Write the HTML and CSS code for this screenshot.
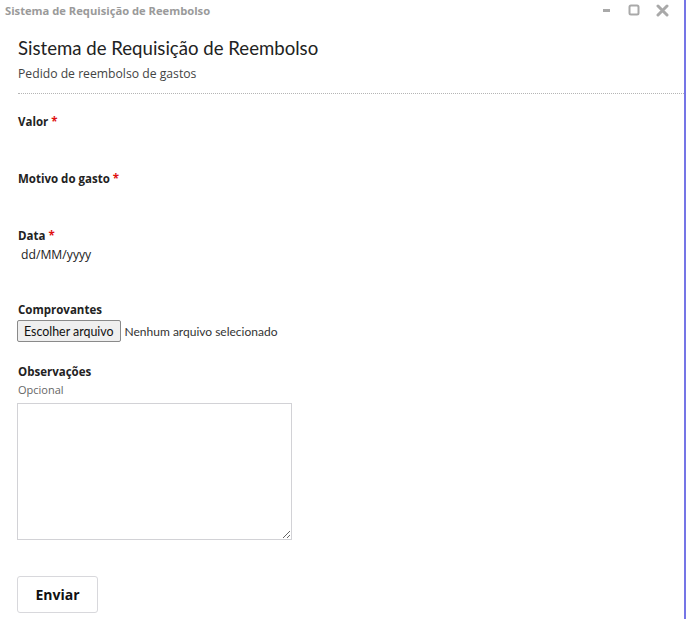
FILE: index.html
```html
<!DOCTYPE html>
<html>
<head>
    <title>Sistema de Requisição de Reembolso</title>
    <link rel="stylesheet" href="styles.css">
</head>
<body>
    <div class="window">
        <div class="titlebar">
            <span class="titlebar-text">Sistema de Requisição de Reembolso</span>
            <div class="controls">
                <svg width="10" height="10" viewBox="0 0 10 10"><rect x="1" y="4" width="7" height="3" fill="#a9a9a9"/></svg>
                <svg width="12" height="12" viewBox="0 0 12 12"><rect x="1.5" y="1.5" width="9" height="9" rx="1.5" fill="none" stroke="#a9a9a9" stroke-width="2"/></svg>
                <svg width="13" height="13" viewBox="0 0 13 13"><path d="M2 2 L11 11 M11 2 L2 11" stroke="#a9a9a9" stroke-width="3" stroke-linecap="round"/></svg>
            </div>
        </div>

        <div class="content">
            <h1>Sistema de Requisição de Reembolso</h1>
            <p class="subtitle">Pedido de reembolso de gastos</p>
            <div class="divider"></div>

            <form>
                <div class="field">
                    <label>Valor <span class="req">*</span></label>
                    <div class="blank"></div>
                </div>
                <div class="field">
                    <label>Motivo do gasto <span class="req">*</span></label>
                    <div class="blank"></div>
                </div>
                <div class="field">
                    <label>Data <span class="req">*</span></label>
                    <div class="date">dd/MM/yyyy</div>
                </div>
                <div class="field file-field">
                    <label>Comprovantes</label>
                    <div class="file">
                        <button type="button" class="file-btn">Escolher arquivo</button>
                        <span class="file-name">Nenhum arquivo selecionado</span>
                    </div>
                </div>
                <div class="field">
                    <label>Observações</label>
                    <div class="hint">Opcional</div>
                    <textarea></textarea>
                </div>
                <button type="button" class="submit">Enviar</button>
            </form>
        </div>
    </div>
</body>
</html>
```

FILE: styles.css
```css
html, body {
    margin: 0;
    background: #fff;
}
body {
    font-family: "Open Sans", "Noto Sans", sans-serif;
    color: #222;
}
.window {
    height: 100vh;
    width: 684px;
    border-right: 2px solid #7575e6;
    box-sizing: content-box;
}
.titlebar {
    height: 20px;
    display: flex;
    align-items: center;
    justify-content: space-between;
    padding-left: 5px;
}
.titlebar-text {
    font-size: 11.2px;
    font-weight: bold;
    color: #9a9a9a;
}
.controls {
    display: flex;
    align-items: center;
    gap: 16px;
    padding-right: 15px;
}
.content {
    padding-left: 18px;
}
h1 {
    font-family: Lato, "Open Sans", sans-serif;
    font-size: 18.6px;
    font-weight: normal;
    line-height: 26px;
    margin: 15px 0 0;
    color: #222;
}
.subtitle {
    font-size: 12.2px;
    line-height: 18px;
    margin: 4px 0 0;
    color: #444;
}
.divider {
    border-top: 1px dotted #b5b5b5;
    margin-top: 10px;
}
form {
    padding-top: 19px;
}
.field {
    margin-bottom: 18px;
}
label {
    display: block;
    font-size: 11.5px;
    font-weight: bold;
    line-height: 18px;
}
.req {
    color: #e01010;
}
.blank {
    height: 21px;
}
.date {
    height: 38px;
    font-size: 12.2px;
    line-height: 20px;
    padding-left: 3px;
    color: #222;
}
.file-field {
    margin-bottom: 21px;
}
.file {
    display: flex;
    align-items: center;
    margin-top: 1px;
}
.file-btn {
    font-family: Lato, "Open Sans", sans-serif;
    font-size: 12.4px;
    height: 22px;
    padding: 0 6px;
    background: #efefef;
    border: 1px solid #8a8a8a;
    border-radius: 2px;
    color: #111;
    margin-left: -1px;
}
.file-name {
    font-family: Lato, "Open Sans", sans-serif;
    font-size: 12px;
    color: #333;
    margin-left: 4px;
}
.hint {
    font-size: 11px;
    line-height: 18px;
    color: #666;
}
textarea {
    display: block;
    margin: 4px 0 0 -1px;
    width: 275px;
    height: 137px;
    box-sizing: border-box;
    border: 1px solid #d2d2d6;
    border-radius: 0;
}
.submit {
    margin-top: 18px;
    margin-left: -1px;
    width: 81px;
    height: 37px;
    background: #fff;
    border: 1px solid #d8d8dc;
    border-radius: 3px;
    font-family: inherit;
    font-size: 14px;
    font-weight: bold;
    color: #111;
}
```
